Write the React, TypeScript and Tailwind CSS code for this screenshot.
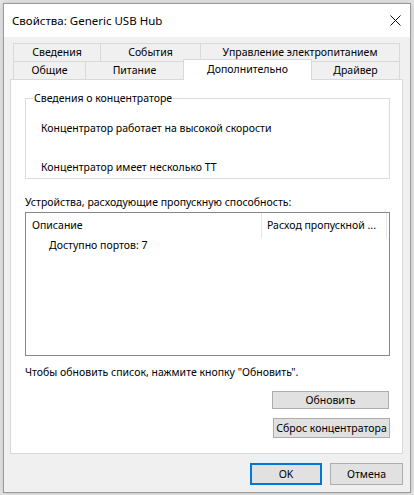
import React from "react";

function Tab({ w, children }: { w: string; children: React.ReactNode }) {
  return (
    <div
      className={`${w} h-[18px] flex items-center justify-center border-l border-t border-[#d9d9d9] bg-[#f0f0f0]`}
    >
      {children}
    </div>
  );
}

function Button({ className, children }: { className: string; children: React.ReactNode }) {
  return (
    <div
      className={`${className} flex items-center justify-center whitespace-nowrap bg-[#e1e1e1] border border-[#adadad]`}
    >
      {children}
    </div>
  );
}

export default function App() {
  return (
    <div className="w-[414px] h-[495px] bg-[#e4e4e4] overflow-hidden font-['Noto_Sans',sans-serif] text-[10.5px] leading-[15px] text-black">
      {/* Dialog */}
      <div className="ml-[3px] mt-[3px] w-[408px] h-[490px] border border-[#9a9a9a] bg-[#f0f0f0] flex flex-col shadow-[0_0_6px_rgba(0,0,0,0.15)]">
        {/* Title bar */}
        <div className="h-[33px] bg-white flex items-center justify-between pl-[8px] pr-[9px] text-[11.5px]">
          <span>Свойства: Generic USB Hub</span>
          <svg width="11" height="11" viewBox="0 0 11 11" className="mb-[1px]">
            <path d="M0.5 0.5 L10.5 10.5 M10.5 0.5 L0.5 10.5" stroke="#111" strokeWidth="1" />
          </svg>
        </div>

        <div className="flex flex-col pt-[6px]">
          {/* Tabs */}
          <div className="flex flex-col ml-[9px] w-[387px]">
            <div className="flex h-[18px]">
              <Tab w="w-[87px]">Сведения</Tab>
              <Tab w="w-[100px]">События</Tab>
              <div className="w-[200px] h-[18px] flex items-center justify-center border-l border-t border-r border-[#d9d9d9] bg-[#f0f0f0]">
                Управление электропитанием
              </div>
            </div>
            <div className="flex h-[18px] items-start">
              <Tab w="w-[72px]">Общие</Tab>
              <Tab w="w-[98px]">Питание</Tab>
              <div className="relative z-10 w-[129px] h-[21px] -mt-[2px] pt-[2px] flex justify-center border-l border-t border-r border-[#d9d9d9] bg-white">
                Дополнительно
              </div>
              <div className="w-[88px] h-[18px] flex items-center justify-center border-t border-r border-[#d9d9d9] bg-[#f0f0f0]">
                Драйвер
              </div>
            </div>
          </div>

          {/* Page panel */}
          <div className="ml-[6px] w-[393px] h-[375px] border border-[#d9d9d9] bg-white flex flex-col pl-[14px] pr-[12px]">
            <fieldset className="mt-[11px] h-[88px] border border-[#dcdcdc] pl-[7px]">
              <legend className="px-[1px]">Сведения о концентраторе</legend>
              <div className="pl-[8px] mt-[15px]">Концентратор работает на высокой скорости</div>
              <div className="pl-[8px] mt-[24px]">Концентратор имеет несколько TT</div>
            </fieldset>

            <div className="mt-[16px]">Устройства, расходующие пропускную способность:</div>

            <div className="mt-[2px] h-[144px] border border-[#828790] flex flex-col">
              <div className="flex h-[25px] items-center">
                <div className="w-[236px] h-full flex items-center pl-[6px] border-r border-[#e5e5e5]">
                  Описание
                </div>
                <div className="w-[125px] h-full flex items-center pl-[5px] border-r border-[#e5e5e5]">
                  Расход пропускной ...
                </div>
              </div>
              <div className="pl-[23px]">Доступно портов: 7</div>
            </div>

            <div className="mt-[9px]">Чтобы обновить список, нажмите кнопку "Обновить".</div>

            <Button className="self-end mt-[11px] w-[117px] h-[18px] mr-[1px]">Обновить</Button>
            <Button className="self-end mt-[9px] w-[117px] h-[20px]">Сброс концентратора</Button>
          </div>

          {/* Dialog buttons */}
          <div className="flex justify-end gap-[8px] mt-[9px] pr-[7px]">
            <div className="w-[72px] h-[22px] flex items-center justify-center bg-[#e1e1e1] border-2 border-[#0078d7]">
              OK
            </div>
            <Button className="w-[73px] h-[22px]">Отмена</Button>
          </div>
        </div>
      </div>
    </div>
  );
}
